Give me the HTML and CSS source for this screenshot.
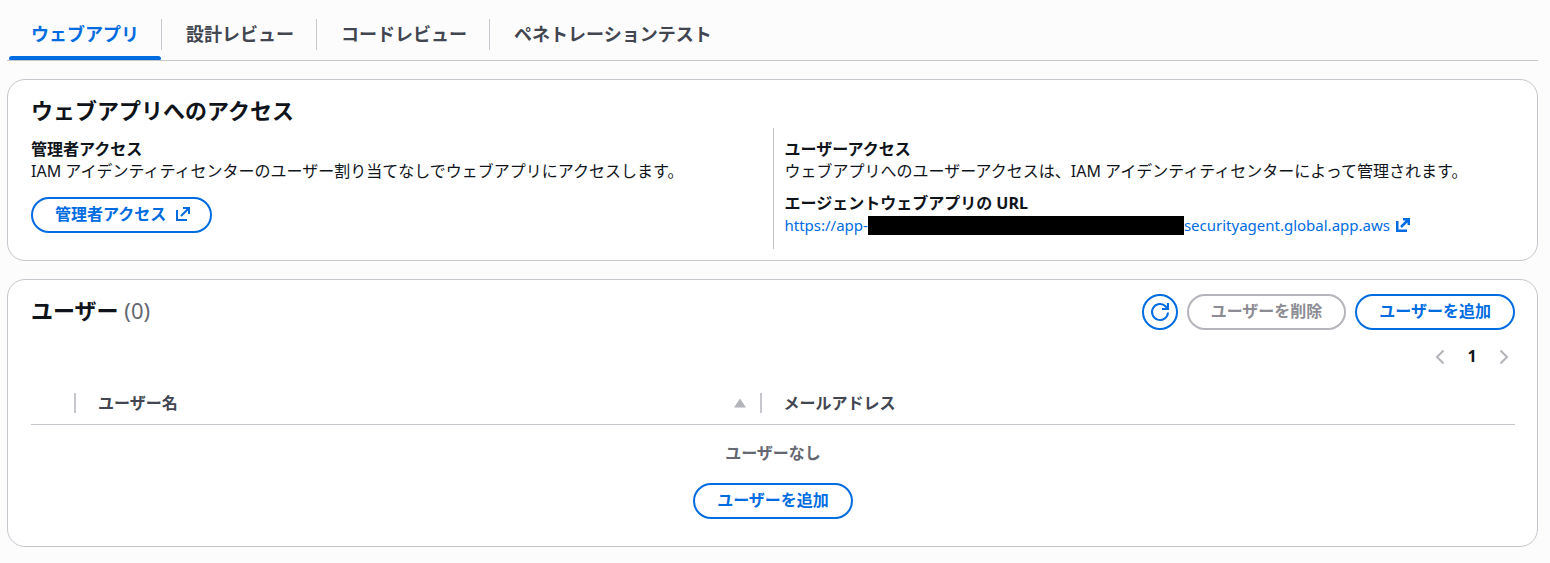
FILE: index.html
```html
<!DOCTYPE html>
<html lang="ja">
  <head>
    <meta charset="UTF-8" />
    <meta name="viewport" content="width=device-width, initial-scale=1.0" />
    <title>ウェブアプリ</title>
    <link rel="stylesheet" href="styles.css">
  </head>
  <body>
    <nav class="tabs">
      <button type="button" class="tab active">ウェブアプリ</button>
      <button type="button" class="tab">設計レビュー</button>
      <button type="button" class="tab">コードレビュー</button>
      <button type="button" class="tab">ペネトレーションテスト</button>
    </nav>

    <main>
      <section class="card access">
        <h2>ウェブアプリへのアクセス</h2>
        <div class="columns">
          <div class="column">
            <h3>管理者アクセス</h3>
            <p>IAM アイデンティティセンターのユーザー割り当てなしでウェブアプリにアクセスします。</p>
            <button type="button" class="btn admin-btn">
              管理者アクセス
              <svg class="icon" viewBox="0 0 14 14" aria-hidden="true">
                <path d="M7 1h6v6M5 9l8-8M1 3v10h10" />
              </svg>
            </button>
          </div>
          <div class="column">
            <h3>ユーザーアクセス</h3>
            <p>ウェブアプリへのユーザーアクセスは、IAM アイデンティティセンターによって管理されます。</p>
            <h3 class="url-label">エージェントウェブアプリの URL</h3>
            <a class="app-link" href="#">https://app-<span class="redacted"></span>securityagent.global.app.aws<svg class="icon bold" viewBox="0 0 14 14" aria-hidden="true">
                <path d="M7 1.250h5.750V7M5 9l7.500-7.500M1.250 3v9.750H11" />
              </svg></a>
          </div>
        </div>
      </section>

      <section class="card users">
        <div class="users-header">
          <h2>ユーザー <span class="count">(0)</span></h2>
          <div class="actions">
            <button type="button" class="btn refresh" aria-label="更新">
              <svg class="icon-lg" viewBox="0 0 18 18" aria-hidden="true">
                <path d="M17 9.500A8 8 0 1 1 14.800 3.500L17 6M17 0v6h-6" />
              </svg>
            </button>
            <button type="button" class="btn" disabled>ユーザーを削除</button>
            <button type="button" class="btn">ユーザーを追加</button>
          </div>
        </div>

        <div class="pagination">
          <button type="button" class="page-btn" aria-label="前のページ" disabled>
            <svg viewBox="0 0 10 16" aria-hidden="true"><path d="M8.500 1.500L2 8l6.500 6.500" /></svg>
          </button>
          <button type="button" class="page-btn current">1</button>
          <button type="button" class="page-btn" aria-label="次のページ" disabled>
            <svg viewBox="0 0 10 16" aria-hidden="true"><path d="M1.500 1.500L8 8l-6.500 6.500" /></svg>
          </button>
        </div>

        <table>
          <thead>
            <tr>
              <td class="select-col"><div class="head-cell divided"></div></td>
              <th class="name-col">
                <div class="head-cell divided">
                  ユーザー名
                  <svg class="sort" viewBox="0 0 12 10" aria-hidden="true"><path d="M6 0.500L12 9.500H0z" /></svg>
                </div>
              </th>
              <th><div class="head-cell">メールアドレス</div></th>
            </tr>
          </thead>
          <tbody>
            <tr>
              <td colspan="3" class="empty">
                <p>ユーザーなし</p>
                <button type="button" class="btn">ユーザーを追加</button>
              </td>
            </tr>
          </tbody>
        </table>
      </section>
    </main>
  </body>
</html>
```
FILE: styles.css
```css
* {
  box-sizing: border-box;
}

body {
  margin: 0;
  padding: 8px 12px 16px 7px;
  background-color: #fcfcfd;
  color: #0f141a;
  font-family: "Noto Sans", "Noto Sans CJK JP", sans-serif;
  font-size: 16px;
  line-height: 22px;
}

h2,
h3,
p {
  margin: 0;
}

h2 {
  font-size: 22px;
  line-height: 28px;
}

h3 {
  font-size: 16px;
  line-height: 22px;
}

button {
  font-family: inherit;
  font-size: 16px;
  font-weight: bold;
  line-height: 22px;
  cursor: pointer;
}

/* tabs */
.tabs {
  display: flex;
  height: 53px;
  border-bottom: 1px solid #c6c6cd;
}

.tab {
  position: relative;
  height: 52px;
  padding: 0 23px 0 24px;
  border: none;
  background: none;
  color: #424650;
  font-size: 18px;
}

.tab:not(:last-child)::before {
  content: "";
  position: absolute;
  top: 11px;
  right: 0;
  width: 1px;
  height: 31px;
  background-color: #c6c6cd;
}

.tab.active {
  color: #006ce0;
}

.tab.active::after {
  content: "";
  position: absolute;
  left: 2px;
  right: 1px;
  bottom: 0;
  height: 4px;
  border-radius: 4px 4px 2px 2px;
  background-color: #006ce0;
}

/* cards */
.card {
  margin-top: 18px;
  padding: 0 23px;
  border: 1px solid #c6c6cd;
  border-radius: 18px;
  background-color: #fff;
}

.access {
  padding-top: 16px;
  padding-bottom: 11px;
}

.columns {
  display: grid;
  grid-template-columns: 1fr 1fr;
  margin-top: 4px;
}

.column {
  padding: 10px 0 13px;
}

.column + .column {
  padding-left: 11px;
  border-left: 1px solid #c6c6cd;
}

.url-label {
  margin-top: 10px;
}

/* buttons */
.btn {
  display: inline-flex;
  align-items: center;
  justify-content: center;
  gap: 10px;
  height: 36px;
  padding: 0 22px 2px;
  border: 2px solid #006ce0;
  border-radius: 18px;
  background-color: #fff;
  color: #006ce0;
}

.btn:disabled {
  border-color: #b4b4bb;
  color: #8c8c94;
  cursor: default;
}

.admin-btn {
  margin: 15px 0 3px;
  padding-right: 20px;
}

.refresh {
  width: 36px;
  padding: 0;
}

svg {
  fill: none;
  stroke: currentColor;
  stroke-width: 2;
}

.icon {
  width: 14px;
  height: 14px;
}

.icon.bold {
  margin-left: 6px;
  stroke-width: 2.5;
}

.icon-lg {
  width: 18px;
  height: 18px;
  overflow: visible;
}

.app-link {
  display: flex;
  align-items: center;
  color: #006ce0;
  font-size: 15px;
  text-decoration: none;
}

.redacted {
  width: 316px;
  height: 19px;
  background-color: #000;
}

/* users */
.users {
  padding: 14px 22px 27px 23px;
}

.users-header {
  display: flex;
  align-items: center;
  justify-content: space-between;
}

.users-header h2 {
  padding-bottom: 4px;
}

.count {
  color: #656871;
  font-weight: normal;
}

.actions {
  display: flex;
  gap: 9px;
}

.pagination {
  display: flex;
  justify-content: flex-end;
  gap: 12px;
  margin: 12px 6px 11px;
}

.page-btn {
  display: flex;
  align-items: center;
  justify-content: center;
  height: 30px;
  padding: 0;
  border: none;
  background: none;
  color: #b4b4bb;
}

.page-btn svg {
  width: 10px;
  height: 16px;
}

.page-btn.current {
  width: 30px;
  padding-bottom: 2px;
  color: #0f141a;
}

table {
  width: 100%;
  table-layout: fixed;
  border-collapse: collapse;
}

thead th,
thead td {
  height: 41px;
  padding: 0;
  border-bottom: 1px solid #c6c6cd;
  color: #424650;
  text-align: left;
}

.select-col {
  width: 45px;
}

.name-col {
  width: 46.2%;
}

.head-cell {
  display: flex;
  align-items: center;
  justify-content: space-between;
  height: 20px;
  padding-left: 22px;
}

.head-cell.divided {
  padding-right: 14px;
  border-right: 2px solid #c6c6cd;
}

.sort {
  width: 12px;
  height: 10px;
  fill: #b4b4bb;
  stroke: none;
}

.empty {
  padding: 17px 0 0;
  text-align: center;
}

.empty p {
  margin-bottom: 19px;
  color: #656871;
  font-weight: bold;
}

.empty .btn {
  vertical-align: top;
}
```
